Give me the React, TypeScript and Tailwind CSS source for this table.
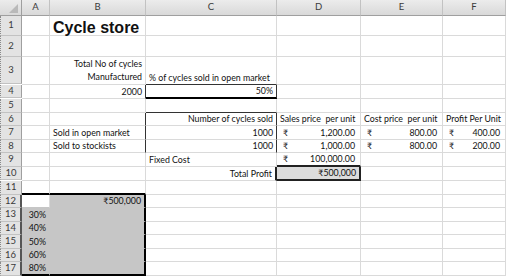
import React from 'react';

type Cell = {
  t?: React.ReactNode;
  right?: boolean;
  r?: string;
  b?: string;
  bg?: string;
  extra?: string;
};

const COLS = ['A', 'B', 'C', 'D', 'E', 'F'];
const ROW_H = [20, 21, 27, 13, 14, 13, 14, 13, 14, 13, 14, 13, 14, 13, 14, 13, 14];

const GRID_R = 'border-r border-r-[#dadada]';
const GRID_B = 'border-b border-b-[#dadada]';
const DARK_R = 'border-r border-r-[#333]';
const DARK_B = 'border-b border-b-[#333]';
const THICK_R = 'border-r-2 border-r-black';
const THICK_B = 'border-b-2 border-b-black';
const GREY = 'bg-[#c6c6c6]';
const GREY_R = 'border-r border-r-[#c6c6c6]';
const GREY_B = 'border-b border-b-[#c6c6c6]';

function Acc({ v }: { v: string }) {
  return (
    <span className="flex w-full justify-between pl-[3px] pr-[2px]">
      <span>₹</span>
      <span>{v}</span>
    </span>
  );
}

const cells: Record<string, Cell> = {
  B1: {
    t: 'Cycle store',
    extra: "font-['Liberation_Sans',Arial,sans-serif] font-bold text-[16px] whitespace-nowrap pl-[3px] pb-[2px]",
  },
  B3: {
    t: (
      <span className="leading-[13px]">
        Total No of cycles
        <br />
        Manufactured
      </span>
    ),
    right: true,
  },
  C3: { t: '% of cycles sold in open market', b: DARK_B },
  B4: { t: '2000', right: true, r: DARK_R },
  C4: { t: '50%', right: true, r: DARK_R, b: THICK_B },
  C5: { b: DARK_B },
  B6: { r: DARK_R },
  C6: { t: 'Number of cycles sold', right: true, r: DARK_R },
  D6: { t: 'Sales price\u00a0 per unit' },
  E6: { t: 'Cost price\u00a0 per unit' },
  F6: { t: 'Profit Per Unit' },
  B7: { t: 'Sold in open market', r: DARK_R },
  C7: { t: '1000', right: true, r: DARK_R },
  D7: { t: <Acc v="1,200.00" /> },
  E7: { t: <Acc v="800.00" /> },
  F7: { t: <Acc v="400.00" /> },
  B8: { t: 'Sold to stockists', r: DARK_R },
  C8: { t: '1000', right: true, r: DARK_R },
  D8: { t: <Acc v="1,000.00" /> },
  E8: { t: <Acc v="800.00" /> },
  F8: { t: <Acc v="200.00" /> },
  C9: { t: 'Fixed Cost' },
  D9: { t: <Acc v="100,000.00" />, b: 'border-b-2 border-b-[#222]' },
  C10: { t: 'Total Profit', right: true, r: 'border-r-2 border-r-[#222]' },
  D10: {
    t: '₹500,000',
    right: true,
    bg: 'bg-[#dcdcdc]',
    r: 'border-r-2 border-r-[#222]',
    b: 'border-b-2 border-b-[#222]',
  },
  A11: { b: THICK_B },
  B11: { b: THICK_B },
  // A12 stays blank and white; the rest of the block is shaded
  A12: { r: GRID_R, b: GREY_B, bg: 'bg-white' },
  B12: { t: '₹500,000', right: true, bg: GREY, r: THICK_R, b: GREY_B },
  A13: { t: '30%', right: true, bg: GREY, r: GREY_R, b: GREY_B },
  B13: { bg: GREY, r: THICK_R, b: GREY_B },
  A14: { t: '40%', right: true, bg: GREY, r: GREY_R, b: GREY_B },
  B14: { bg: GREY, r: THICK_R, b: GREY_B },
  A15: { t: '50%', right: true, bg: GREY, r: GREY_R, b: GREY_B },
  B15: { bg: GREY, r: THICK_R, b: GREY_B },
  A16: { t: '60%', right: true, bg: GREY, r: GREY_R, b: GREY_B },
  B16: { bg: GREY, r: THICK_R, b: GREY_B },
  A17: { t: '80%', right: true, bg: GREY, r: GREY_R, b: THICK_B },
  B17: { bg: GREY, r: THICK_R, b: THICK_B },
};

function SheetCell({ id }: { id: string }) {
  const c = cells[id] ?? {};
  return (
    <div
      className={[
        'flex items-end px-[3px] pb-[1px] text-[8.8px] leading-[11px] text-[#111]',
        c.right ? 'justify-end text-right' : 'justify-start',
        c.r ?? GRID_R,
        c.b ?? GRID_B,
        c.bg ?? '',
        c.extra ?? 'whitespace-nowrap',
      ].join(' ')}
    >
      {c.t}
    </div>
  );
}

export default function App() {
  return (
    <div className="h-[276px] w-[516px] overflow-hidden bg-white font-['Lato','Noto_Sans',sans-serif]">
      <div className="grid grid-cols-[22px_28px_96px_131px_84px_82px_63px_1fr]">
        {/* column letters */}
        <div className="relative h-[16px] border-b border-r border-b-[#9f9f9f] border-r-[#9f9f9f] bg-gradient-to-b from-[#ececec] to-[#d9d9d9]">
          <svg className="absolute bottom-[2px] right-[3px]" width="9" height="9" viewBox="0 0 9 9">
            <polygon points="9,0 9,9 0,9" fill="#b9b9b9" />
          </svg>
        </div>
        {COLS.map((col) => (
          <div
            key={col}
            className="flex h-[16px] items-center justify-center border-b border-r border-b-[#9f9f9f] border-r-[#c2c2c2] bg-gradient-to-b from-[#ececec] to-[#d9d9d9] text-[9.5px] text-[#3a3a3a]"
          >
            {col}
          </div>
        ))}
        <div className="h-[16px]" />

        {ROW_H.map((h, i) => {
          const row = i + 1;
          const boxed = row >= 12;
          return (
            <React.Fragment key={row}>
              <div
                style={{ height: h }}
                className={[
                  'flex items-center justify-center border-b border-l border-b-[#c2c2c2] border-l-[#8a8a8a] bg-[#e3e3e3] text-[9.5px] text-[#3a3a3a] [border-left-style:dotted]',
                  boxed ? 'border-r-2 border-r-[#555]' : 'border-r border-r-[#9f9f9f]',
                ].join(' ')}
              >
                {row}
              </div>
              {COLS.map((col) => (
                <SheetCell key={col + row} id={col + row} />
              ))}
              <div />
            </React.Fragment>
          );
        })}
      </div>
    </div>
  );
}
